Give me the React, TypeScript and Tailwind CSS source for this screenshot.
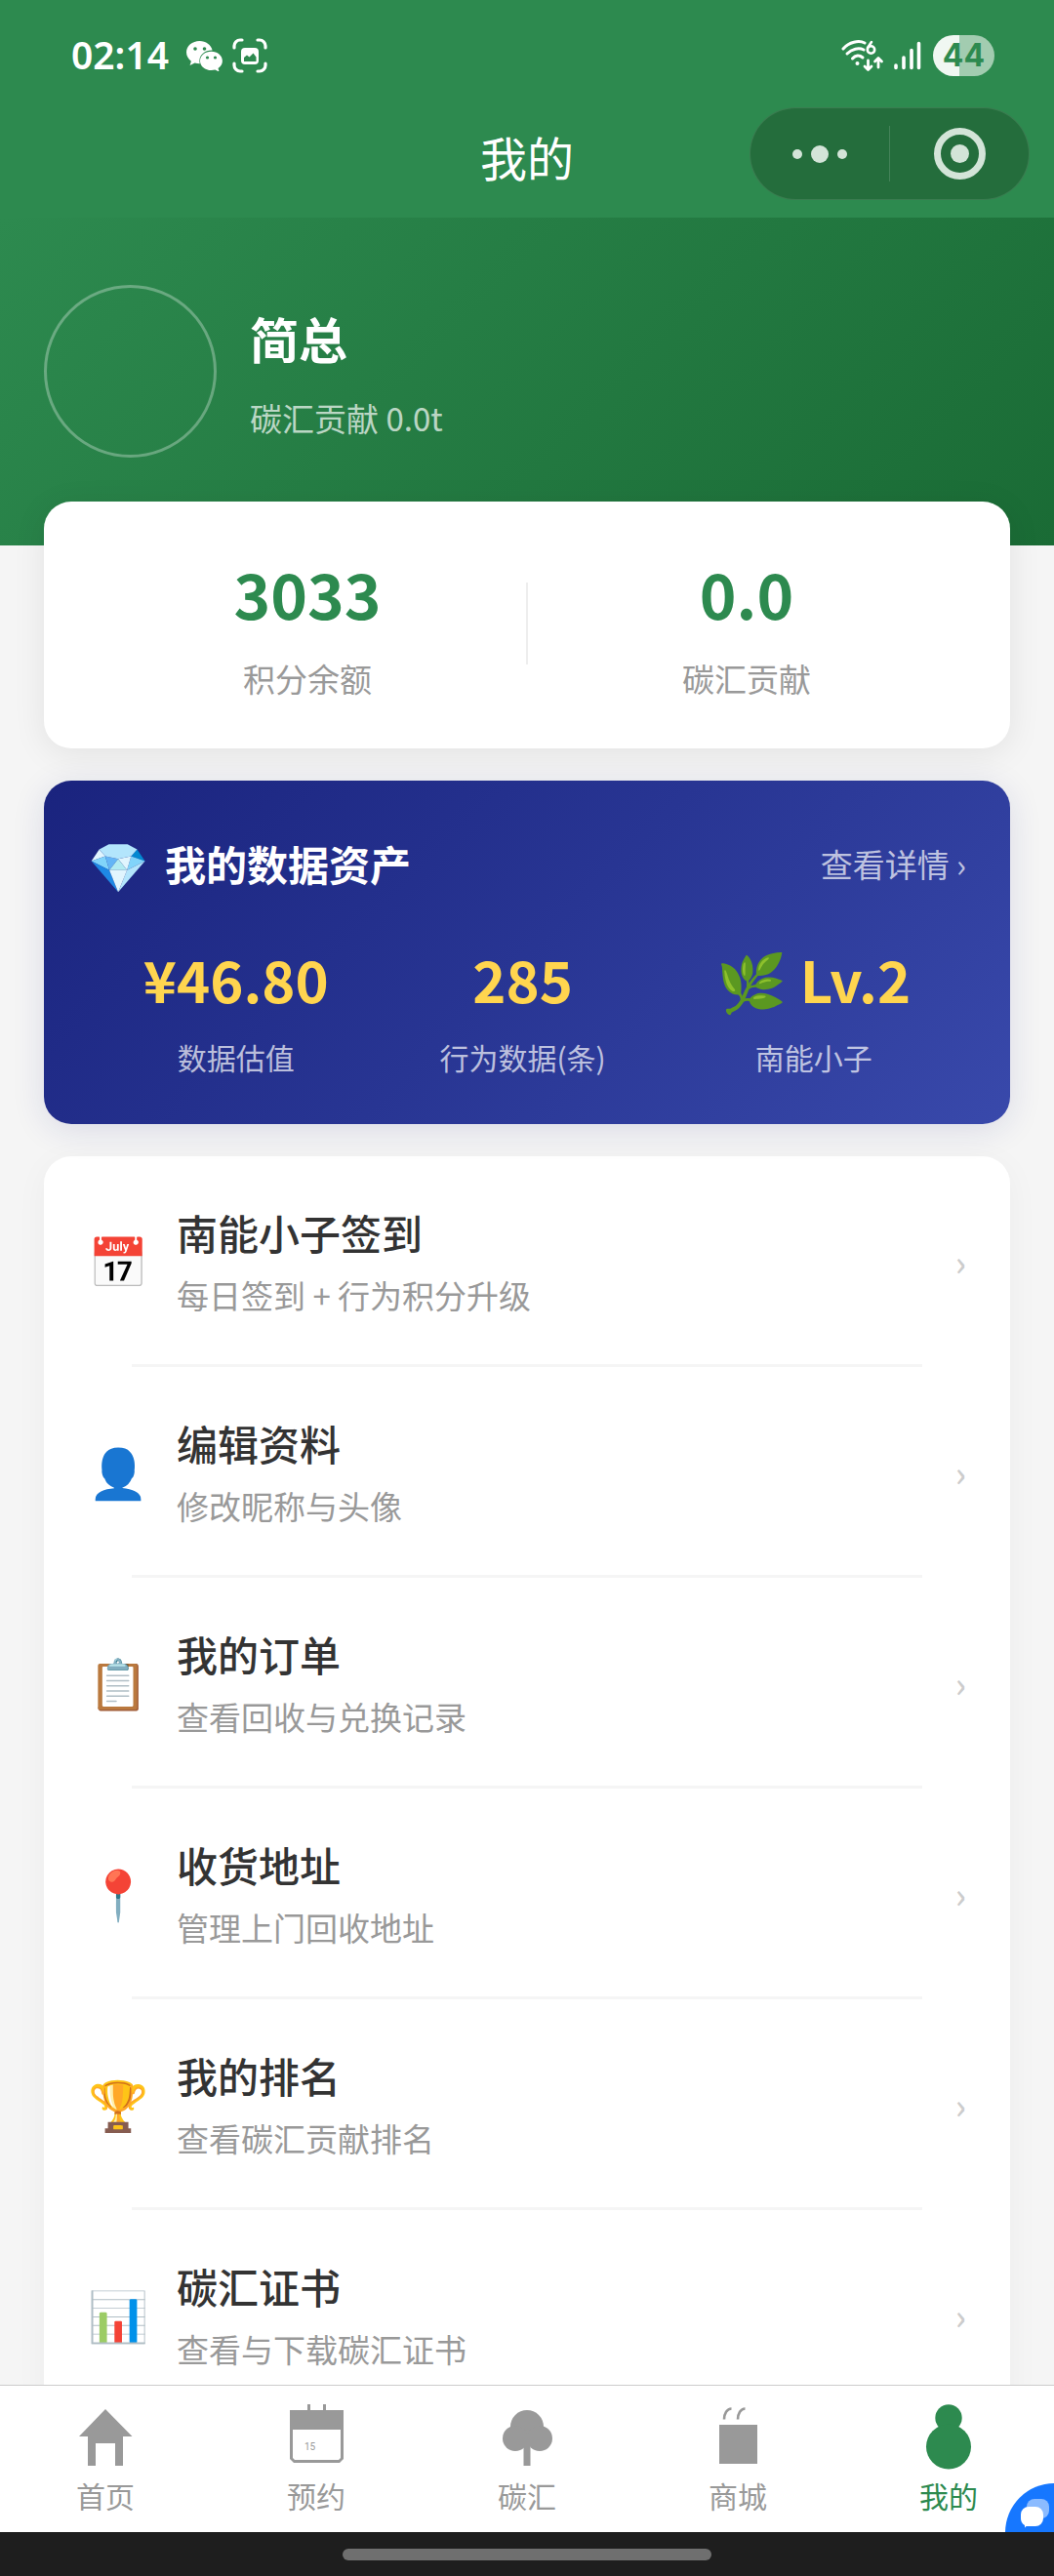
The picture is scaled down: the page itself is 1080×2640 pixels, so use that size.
import type { ReactNode } from "react";

const FONT =
  "font-['Noto_Sans_CJK_SC','Noto_Color_Emoji',sans-serif]";

function WechatIcon() {
  return (
    <svg viewBox="0 0 37 32" className="h-8 w-[37px]" aria-hidden="true">
      <path
        fill="#fff"
        d="M13.500 1C6 1 0 6 0 12.600c0 3.700 1.900 6.900 4.900 9.100L3.600 26l5-2.500c1.600.5 3.200.7 4.900.7h.3a10 10 0 0 1-.4-2.800c0-6 5.500-10.800 12.400-10.800h.8C25.300 5 20 1 13.500 1Z"
      />
      <path
        fill="#fff"
        d="M25.500 11.800C19.200 11.800 14 16 14 21.400S19.200 31 25.500 31c1.400 0 2.700-.2 3.900-.5l4.200 2.100-1.100-3.700c2.700-1.800 4.400-4.500 4.400-7.500 0-5.400-5.100-9.600-11.400-9.600Z"
      />
      <g fill="#2d8a4f">
        <circle cx="9" cy="9" r="1.800" />
        <circle cx="18.500" cy="9" r="1.800" />
        <circle cx="21.500" cy="18" r="1.600" />
        <circle cx="29.500" cy="18" r="1.600" />
      </g>
    </svg>
  );
}

function CaptureIcon() {
  return (
    <svg viewBox="0 0 36 36" className="size-9" aria-hidden="true">
      <path
        fill="none"
        stroke="#fff"
        strokeWidth="3.200"
        strokeLinecap="round"
        d="M2 10V8a6 6 0 0 1 6-6h2M26 2h2a6 6 0 0 1 6 6v2M34 26v2a6 6 0 0 1-6 6h-2M10 34H8a6 6 0 0 1-6-6v-2"
      />
      <rect x="9" y="10" width="18" height="17" rx="4" fill="#fff" />
      <path fill="#2d8a4f" d="M12 24v-4l3-2.500 2.500 2 4-4 3 4V24Z" />
    </svg>
  );
}

function WifiIcon() {
  return (
    <svg viewBox="0 0 44 34" className="h-[34px] w-11" aria-hidden="true">
      <g fill="none" stroke="#fff" strokeWidth="3" strokeLinecap="round">
        <path d="M2 10C8 3 18 1 24 4" />
        <path d="M6 15c5-5 12-6.500 17-4" />
        <path d="M11.500 20c3-3.500 7-4 10.500-1" />
        <path d="M31 3l-4 6" strokeWidth="2.600" />
        <circle cx="30.500" cy="11" r="3.700" strokeWidth="2.600" />
        <path d="M27.500 22v9M24 28l3.500 3.500L31 28" strokeWidth="2.800" strokeLinejoin="round" />
        <path d="M38 29v-9M34.500 23l3.500-3.500 3.500 3.500" strokeWidth="2.800" strokeLinejoin="round" />
      </g>
      <circle cx="16.500" cy="25" r="2" fill="#fff" />
    </svg>
  );
}

function SignalIcon() {
  return (
    <svg viewBox="0 0 28 30" className="h-[30px] w-7" aria-hidden="true">
      <g stroke="#fff" strokeWidth="3.600" strokeLinecap="round">
        <path d="M2 25v2.500M10 17v10.500M18 9.500v18M25.500 2.500v25" />
      </g>
    </svg>
  );
}

function StatusBar() {
  return (
    <div className="flex h-[104px] items-center justify-between pr-[61px] pl-[73px] pt-2.5">
      <div className="flex items-center">
        <time className="pb-1 font-['Noto_Sans'] text-[39px] leading-none font-semibold">02:14</time>
        <div className="ml-4.5 flex items-center gap-2.5">
          <WechatIcon />
          <CaptureIcon />
        </div>
      </div>
      <div className="flex items-center gap-2.5">
        <WifiIcon />
        <SignalIcon />
        <div className="ml-0.5 flex h-[42px] w-[63px] items-center justify-center rounded-full bg-linear-to-r from-[#f0f7f2] from-43% to-[#a2ccb0] to-43% font-[Inter] text-[32px] leading-none font-bold text-[#2d8a4f]">
          44
        </div>
      </div>
    </div>
  );
}

function TitleBar() {
  return (
    <div className="grid grid-cols-[1fr_auto_1fr] items-center px-[25px] pt-1.5 pb-4.5">
      <span />
      <h1 className="pt-1 text-[48px] leading-[68px]">我的</h1>
      <div className="flex h-[95px] w-[287px] items-center justify-self-end rounded-full border border-white/10 bg-[#246d3c]">
        <button type="button" aria-label="更多" className="flex h-full flex-1 items-center justify-center gap-[9px]">
          <span className="size-2.5 rounded-full bg-[#d3e4d8]" />
          <span className="size-[18px] rounded-full bg-[#d3e4d8]" />
          <span className="size-2.5 rounded-full bg-[#d3e4d8]" />
        </button>
        <span className="h-[57px] w-px bg-white/15" />
        <button type="button" aria-label="关闭" className="flex h-full flex-1 items-center justify-center">
          <span className="flex size-[53px] items-center justify-center rounded-full border-[7px] border-[#d3e4d8]">
            <span className="size-[19px] rounded-full bg-[#d3e4d8]" />
          </span>
        </button>
      </div>
    </div>
  );
}

function Profile() {
  return (
    <section className="flex items-center gap-[34px] bg-linear-135 from-[#2d8a4f] to-[#1a6b35] px-[45px] pt-[69px] pb-[90px]">
      <div className="size-[177px] shrink-0 rounded-full border-3 border-white/30" />
      <div>
        <h2 className="text-[50px] leading-[72px] font-bold">简总</h2>
        <p className="mt-[22px] text-[33px] leading-[48px] text-white/70">碳汇贡献 0.0t</p>
      </div>
    </section>
  );
}

function Stat({ value, label }: { value: string; label: string }) {
  return (
    <div className="flex-1 text-center">
      <p className="text-[64px] leading-[96px] font-bold text-[#2d8a4f]">{value}</p>
      <p className="mt-4 text-[33px] leading-[48px] text-[#999]">{label}</p>
    </div>
  );
}

function BalanceCard() {
  return (
    <section className="relative mx-[45px] -mt-[45px] flex items-center rounded-[28px] bg-white px-[45px] pt-[45px] pb-12 shadow-[0_6px_34px_rgba(0,0,0,0.08)]">
      <Stat value="3033" label="积分余额" />
      <span className="-mx-px h-[84px] w-0.5 bg-[#eee]" />
      <Stat value="0.0" label="碳汇贡献" />
    </section>
  );
}

function Asset({ value, label }: { value: string; label: string }) {
  return (
    <div className="text-center">
      <p className="text-[58px] leading-[88px] font-bold text-[#ffd54f]">{value}</p>
      <p className="mt-3.5 text-[30px] leading-[44px] text-white/70">{label}</p>
    </div>
  );
}

function AssetCard() {
  return (
    <section className="relative mx-[45px] mt-[33px] rounded-[28px] bg-linear-135 from-[#1a237e] via-[#283593] to-[#3949ab] px-[45px] pt-[55px] pb-[47px] text-white shadow-[0_6px_34px_rgba(26,35,126,0.12)]">
      <div className="flex items-center justify-between">
        <h2 className="flex items-center text-[42px] leading-[60px] font-bold">
          <span className="flex w-[63px] justify-center text-[50px]">💎</span>
          <span className="ml-4">我的数据资产</span>
        </h2>
        <a href="#assets" className="text-[33px] leading-[48px] text-white/70">
          查看详情 ›
        </a>
      </div>
      <div className="mt-11 flex justify-around">
        <Asset value="¥46.80" label="数据估值" />
        <Asset value="285" label="行为数据(条)" />
        <Asset value="🌿 Lv.2" label="南能小子" />
      </div>
    </section>
  );
}

const MENU = [
  { icon: "📅", title: "南能小子签到", note: "每日签到 + 行为积分升级" },
  { icon: "👤", title: "编辑资料", note: "修改昵称与头像" },
  { icon: "📋", title: "我的订单", note: "查看回收与兑换记录" },
  { icon: "📍", title: "收货地址", note: "管理上门回收地址" },
  { icon: "🏆", title: "我的排名", note: "查看碳汇贡献排名" },
  { icon: "📊", title: "碳汇证书", note: "查看与下载碳汇证书" },
];

function MenuList() {
  return (
    <ul className="mx-[45px] mt-[33px] rounded-[28px] bg-white shadow-[0_6px_34px_rgba(0,0,0,0.04)]">
      {MENU.map((item) => (
        <li key={item.title}>
          <a href="#menu" className="flex items-center px-[45px] pt-12 pb-[47px]">
            <span className="flex w-[63px] justify-center pb-1 text-[50px] leading-[60px]">{item.icon}</span>
            <span className="ml-7 flex flex-1 flex-col gap-2.5">
              <span className="text-[42px] leading-[60px] font-medium text-[#333]">{item.title}</span>
              <span className="text-[33px] leading-[48px] text-[#999]">{item.note}</span>
            </span>
            <span className="text-[36px] leading-[48px] font-medium text-[#ccc]">›</span>
          </a>
          <hr className="mx-[90px] border-t-3 border-[#f5f5f5]" />
        </li>
      ))}
    </ul>
  );
}

const TABS: { label: string; active?: boolean; icon: ReactNode }[] = [
  {
    label: "首页",
    icon: <path d="M36 8 63.500 36H54v30h-8V43H26v23h-8V36H9Z" />,
  },
  {
    label: "预约",
    icon: (
      <>
        <path
          fillRule="evenodd"
          d="M27 3h3v6h13V3h3v6h18v50l-4 4H13l-4-4V9h18ZM12 29v29l2 2h45l2-2V29Z"
        />
        <text x="24" y="50" fontSize="10" fontFamily="Roboto">
          15
        </text>
      </>
    ),
  },
  {
    label: "碳汇",
    icon: (
      <>
        <circle cx="36" cy="26" r="17" />
        <circle cx="24" cy="38" r="13" />
        <circle cx="49" cy="38" r="13" />
        <path d="M32.500 34h7v32h-7Z" />
      </>
    ),
  },
  {
    label: "商城",
    icon: (
      <>
        <path d="M17 24h39v40H17Z" />
        <path
          d="M22 18.500c0-6 3-11 7.500-11M36 18.500c0-6 3-11 7.500-11"
          fill="none"
          stroke="currentColor"
          strokeWidth="2.600"
        />
      </>
    ),
  },
  {
    label: "我的",
    active: true,
    icon: (
      <>
        <circle cx="36" cy="17" r="13.700" />
        <circle cx="36" cy="46.500" r="23" />
      </>
    ),
  },
];

function TabBar() {
  return (
    <nav className="relative flex shrink-0 overflow-hidden border-t border-[#ccc] bg-white pt-4 pb-4.5">
      {TABS.map((tab) => (
        <a
          key={tab.label}
          href="#tab"
          className={`flex flex-1 flex-col items-center ${tab.active ? "text-[#2d8a4f]" : "text-[#999]"}`}
        >
          <svg viewBox="0 0 72 72" fill="currentColor" className="size-[72px]" aria-hidden="true">
            {tab.icon}
          </svg>
          <span className="mt-1 text-[30px] leading-10">{tab.label}</span>
        </a>
      ))}
      <button
        type="button"
        aria-label="客服"
        className="absolute -right-[51px] -bottom-[51px] size-[101px] rounded-full bg-[#1677ff]"
      >
        <svg viewBox="0 0 101 101" aria-hidden="true">
          <rect x="22" y="16" width="23" height="20" rx="8" fill="#fff" opacity=".5" />
          <path fill="#fff" d="M24 24h7a8 8 0 0 1 8 8v4a8 8 0 0 1-8 8H21.500L20 45.500V43a8 8 0 0 1-4-7v-4a8 8 0 0 1 8-8Z" />
        </svg>
      </button>
    </nav>
  );
}

export default function App() {
  return (
    <div className={`flex h-screen flex-col bg-[#f5f5f5] ${FONT}`}>
      <header className="shrink-0 bg-[#2d8a4f] text-white">
        <StatusBar />
        <TitleBar />
      </header>
      <main className="min-h-0 flex-1 overflow-y-auto [scrollbar-width:none]">
        <div className="text-white">
          <Profile />
        </div>
        <BalanceCard />
        <AssetCard />
        <MenuList />
      </main>
      <TabBar />
      <footer className="flex h-[45px] shrink-0 items-center justify-center bg-[#1e1e1e]">
        <span className="h-3 w-[35%] rounded-full bg-[#6f6f6f]" />
      </footer>
    </div>
  );
}
